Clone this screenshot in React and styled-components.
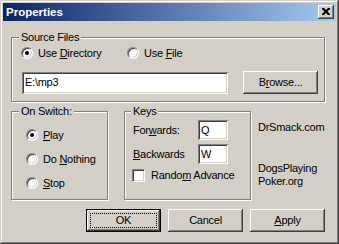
import React from 'react';
import styled, { createGlobalStyle } from 'styled-components';

const GlobalStyle = createGlobalStyle`
    html, body {
        margin: 0;
        padding: 0;
        background: #D4D0C8;
    }
    * {
        box-sizing: border-box;
    }
`;

const Window = styled.div`
    width: 339px;
    height: 244px;
    padding: 3px;
    background: #D4D0C8;
    font-family: "Liberation Sans", Arial, sans-serif;
    font-size: 11px;
    letter-spacing: -0.25px;
    color: #000;
    box-shadow: inset -1px -1px #404040, inset 1px 1px #D4D0C8,
        inset -2px -2px #808080, inset 2px 2px #FFFFFF;
`;

const TitleBar = styled.div`
    height: 18px;
    display: flex;
    align-items: center;
    justify-content: space-between;
    padding: 0 2px 0 3px;
    background: linear-gradient(to right, #0A246A, #A6CAF0);
`;

const Title = styled.span`
    color: #fff;
    font-weight: bold;
    font-size: 11.5px;
    letter-spacing: 0;
    line-height: 14px;
`;

const CloseButton = styled.div`
    width: 16px;
    height: 14px;
    display: flex;
    align-items: center;
    justify-content: center;
    background: #D4D0C8;
    box-shadow: inset -1px -1px #404040, inset 1px 1px #FFFFFF,
        inset -2px -2px #808080, inset 2px 2px #D4D0C8;
    svg {
        display: block;
        margin-top: -1px;
    }
`;

const Content = styled.div`
    padding: 0 11px 0 8px;
`;

const Group = styled.div`
    position: relative;
    border: 1px solid #808080;
    box-shadow: inset 1px 1px #FFFFFF, 1px 1px #FFFFFF;
    margin-top: ${p => p.$top || 0}px;
    width: ${p => (p.$width ? `${p.$width}px` : 'auto')};
    height: ${p => p.$height}px;
    padding: ${p => p.$pad};
    flex-shrink: 0;
`;

const Legend = styled.span`
    position: absolute;
    top: -7px;
    left: ${p => p.$left || 7}px;
    padding: 0 2px;
    line-height: 13px;
    background: #D4D0C8;
`;

const Row = styled.div`
    display: flex;
    align-items: center;
    margin-top: ${p => p.$top || 0}px;
    height: ${p => p.$height || 16}px;
`;

const RadioItem = styled.label`
    display: flex;
    align-items: center;
    gap: 5px;
    width: ${p => (p.$width ? `${p.$width}px` : 'auto')};
    height: 16px;
    line-height: 13px;
`;

const RadioDot = styled.span`
    position: relative;
    width: 12px;
    height: 12px;
    border-radius: 50%;
    background: #fff;
    border: 1px solid;
    border-color: #808080 #FFFFFF #FFFFFF #808080;
    box-shadow: inset 1px 1px #404040, inset -1px -1px #D4D0C8;
    flex-shrink: 0;
    &::after {
        content: '';
        display: ${p => (p.$checked ? 'block' : 'none')};
        position: absolute;
        left: 3px;
        top: 3px;
        width: 4px;
        height: 4px;
        border-radius: 50%;
        background: #000;
    }
`;

const TextBox = styled.div`
    width: ${p => p.$width}px;
    height: ${p => p.$height}px;
    margin-left: ${p => p.$left || 0}px;
    background: #fff;
    box-shadow: inset 1px 1px #808080, inset -1px -1px #FFFFFF,
        inset 2px 2px #404040, inset -2px -2px #D4D0C8;
    padding: 0 3px;
    display: flex;
    align-items: center;
    line-height: 13px;
`;

const Button = styled.div`
    position: relative;
    width: 75px;
    height: 23px;
    margin-left: ${p => p.$left || 0}px;
    display: flex;
    align-items: center;
    justify-content: center;
    background: #D4D0C8;
    line-height: 13px;
    box-shadow: ${p => (p.$default
        ? 'inset 0 0 0 1px #000, inset -2px -2px #404040, inset 2px 2px #FFFFFF, inset -3px -3px #808080'
        : 'inset -1px -1px #404040, inset 1px 1px #FFFFFF, inset -2px -2px #808080')};
    ${p => p.$default && `
        &::after {
            content: '';
            position: absolute;
            left: 4px;
            top: 4px;
            right: 4px;
            bottom: 4px;
            border: 1px dotted #000;
        }
    `}
`;

const BottomRow = styled.div`
    display: flex;
    align-items: flex-start;
    margin-top: 9px;
`;

const Stack = styled.div`
    display: flex;
    flex-direction: column;
    gap: ${p => p.$gap}px;
`;

const KeyLabel = styled.span`
    width: 65px;
    line-height: 13px;
`;

const CheckBox = styled.span`
    width: 13px;
    height: 13px;
    margin-left: -1px;
    margin-right: 6px;
    background: #fff;
    border: 1px solid;
    border-color: #808080 #FFFFFF #FFFFFF #808080;
    box-shadow: inset 1px 1px #404040, inset -1px -1px #D4D0C8;
    flex-shrink: 0;
`;

const Links = styled.div`
    margin-left: 7px;
    padding-top: 10px;
    line-height: 13px;
    p {
        margin: 0;
    }
    .dogs {
        margin-top: 28px;
    }
`;

const ButtonRow = styled.div`
    display: flex;
    justify-content: flex-end;
    margin-top: 9px;
    gap: 7px;
`;

const Radio = ({ checked, width, children }) => (
    <RadioItem $width={width}>
        <RadioDot $checked={checked} />
        <span>{children}</span>
    </RadioItem>
);

const App = () => {
    return (
        <Window>
            <GlobalStyle />
            <TitleBar>
                <Title>Properties</Title>
                <CloseButton>
                    <svg width="8" height="7" viewBox="0 0 8 7">
                        <path d="M0 0h2l2 2 2-2h2v1l-2.5 2.5L8 6v1H6L4 5 2 7H0V6l2.5-2.5L0 1z" fill="#000" />
                    </svg>
                </CloseButton>
            </TitleBar>
            <Content>
                <Group $top={16} $height={65} $pad="7px 0 0 9px">
                    <Legend>Source Files</Legend>
                    <Row>
                        <Radio checked width={106}>Use <u>D</u>irectory</Radio>
                        <Radio>Use <u>F</u>ile</Radio>
                    </Row>
                    <Row $top={10} $height={23}>
                        <TextBox $width={206} $height={22} $left={1}>E:\mp3</TextBox>
                        <Button $left={15}>B<u>r</u>owse...</Button>
                    </Row>
                </Group>
                <BottomRow>
                    <Group $width={97} $height={89} $pad="15px 0 0 14px">
                        <Legend>On Switch:</Legend>
                        <Stack $gap={8}>
                            <Radio checked><u>P</u>lay</Radio>
                            <Radio>Do <u>N</u>othing</Radio>
                            <Radio><u>S</u>top</Radio>
                        </Stack>
                    </Group>
                    <Group $width={127} $height={89} $pad="8px 0 0 8px" style={{ marginLeft: 16 }}>
                        <Legend $left={6}>Keys</Legend>
                        <Row $height={20}>
                            <KeyLabel>For<u>w</u>ards:</KeyLabel>
                            <TextBox $width={30} $height={20}>Q</TextBox>
                        </Row>
                        <Row $height={20} $top={4}>
                            <KeyLabel><u>B</u>ackwards</KeyLabel>
                            <TextBox $width={30} $height={20}>W</TextBox>
                        </Row>
                        <Row $top={3}>
                            <CheckBox />
                            <span>Rando<u>m</u> Advance</span>
                        </Row>
                    </Group>
                    <Links>
                        <p>DrSmack.com</p>
                        <p className="dogs">DogsPlaying</p>
                        <p>Poker.org</p>
                    </Links>
                </BottomRow>
                <ButtonRow>
                    <Button $default>OK</Button>
                    <Button>Cancel</Button>
                    <Button><u>A</u>pply</Button>
                </ButtonRow>
            </Content>
        </Window>
    );
};

export default App;
